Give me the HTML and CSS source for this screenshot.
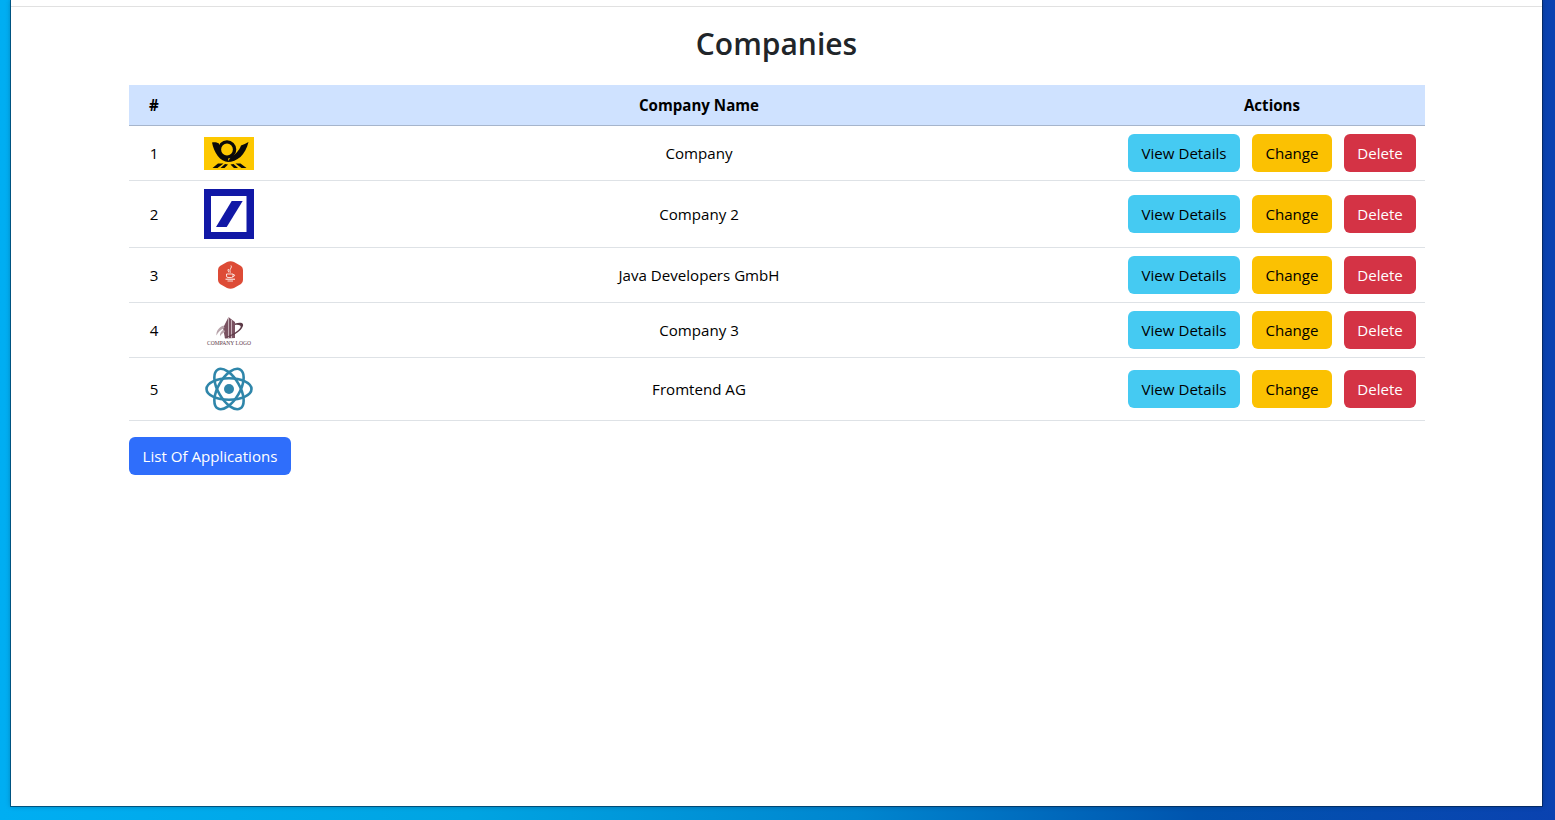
FILE: index.html
```html
<!DOCTYPE html>
<html lang="en">
<head>
<meta charset="utf-8">
<title>Companies</title>
<link rel="stylesheet" href="styles.css">
</head>
<body>
<main class="window">
  <hr class="top-rule">
  <div class="container">
    <h1 class="title">Companies</h1>
    <table class="companies">
      <colgroup>
        <col class="col-num"><col class="col-logo"><col class="col-name"><col class="col-actions">
      </colgroup>
      <thead>
        <tr><th>#</th><th></th><th>Company Name</th><th>Actions</th></tr>
      </thead>
      <tbody>
        <tr>
          <td>1</td>
          <td><svg class="logo logo-post" width="50" height="33" viewBox="0 0 50 33">
            <rect width="50" height="33" fill="#fdc800"/>
            <circle cx="23" cy="12.500" r="7.600" fill="none" stroke="#0a0a0a" stroke-width="3.400"/>
            <path d="M8 5.500 C10 5 12.500 5 15 6.500 L15 14 C16 18 19.500 21 24 21 L24.500 25 C16 25 10 15.500 8 5.500 Z" fill="#0a0a0a"/>
            <path d="M23.500 25 C33 25 41.500 18 44.500 5 C42 6.500 39.500 7.500 37 8.500 C35.500 13 31 18 27 20 Z" fill="#0a0a0a"/>
            <path d="M8.500 31 L14 26.500 L19.500 26.500 L13.500 31 Z M16.500 31 L21 27 L24 27.500 L20.500 31 Z M30 31 L26.500 27.500 L29.500 27 L34 31 Z M37.500 31 L31.500 26.500 L36.500 26.500 L42.500 31 Z" fill="#0a0a0a"/>
          </svg></td>
          <td>Company</td>
          <td><div class="actions"><a class="btn btn-info">View Details</a><a class="btn btn-warning">Change</a><a class="btn btn-danger">Delete</a></div></td>
        </tr>
        <tr>
          <td>2</td>
          <td><svg class="logo" width="50" height="50" viewBox="0 0 50 50">
            <rect width="50" height="50" fill="#1118a6"/>
            <rect x="7" y="7" width="35.500" height="36" fill="#fff"/>
            <path d="M27.700 12 H38.700 L22.700 38 H12 Z" fill="#1118a6"/>
          </svg></td>
          <td>Company 2</td>
          <td><div class="actions"><a class="btn btn-info">View Details</a><a class="btn btn-warning">Change</a><a class="btn btn-danger">Delete</a></div></td>
        </tr>
        <tr>
          <td>3</td>
          <td><svg class="logo" width="50" height="38" viewBox="0 0 50 38">
            <path d="M23 6 Q26.500 4.500 30 6 L37 10 Q39 11.500 39 14 V24 Q39 26.500 37 28 L30 32 Q26.500 33.500 23 32 L16 28 Q14 26.500 14 24 V14 Q14 11.500 16 10 Z" fill="#dd4b36"/>
            <g fill="none" stroke="#fff">
              <path d="M27 9.500 C28.500 12 24.500 13 26.500 16.500 M24.500 13 C23.500 14.500 24.500 15.500 25 16.500" stroke-width="0.900"/>
              <path d="M22.500 18 H29 V20 Q29 21.500 27.500 21.500 H24 Q22.500 21.500 22.500 20 Z M29 18.500 Q31 18.500 30.500 19.800 Q30 20.800 28.500 20.800" stroke-width="0.800"/>
              <path d="M21.500 23.200 H31" stroke-width="1"/>
              <path d="M23.500 25 H29" stroke-width="0.800"/>
            </g>
          </svg></td>
          <td>Java Developers GmbH</td>
          <td><div class="actions"><a class="btn btn-info">View Details</a><a class="btn btn-warning">Change</a><a class="btn btn-danger">Delete</a></div></td>
        </tr>
        <tr>
          <td>4</td>
          <td><svg class="logo" width="50" height="38" viewBox="0 0 50 38">
            <path d="M24.500 6 L27 8 L31 11 V27 L21 27.500 L19 17 Z" fill="#7a5261"/>
            <path d="M24.500 6 V27 M27.500 9 V27" stroke="#d9c9ce" stroke-width="0.800"/>
            <path d="M31 12.500 C38 10.500 41 12.500 38 17 C35 21.500 28 25.500 20 27 C28 24 34.500 20 36.500 16.500 C37.500 14.500 35 13.500 31 14 Z" fill="#5c3a47"/>
            <path d="M19.500 14.500 C14.500 16.500 12 20.500 12.500 24.500 C14 21 17 18.500 20.500 17 Z M20 18.500 C17 20 15.500 22.500 16 25.500 C17 23.500 18.500 22 21 21 Z" fill="#b9a5ac"/>
            <text x="25" y="34" class="logo-caption" text-anchor="middle">COMPANY LOGO</text>
          </svg></td>
          <td>Company 3</td>
          <td><div class="actions"><a class="btn btn-info">View Details</a><a class="btn btn-warning">Change</a><a class="btn btn-danger">Delete</a></div></td>
        </tr>
        <tr>
          <td>5</td>
          <td><svg class="logo" width="50" height="46" viewBox="0 0 50 46">
            <g fill="none" stroke="#2f86aa" stroke-width="2.600">
              <ellipse cx="25" cy="23" rx="22.500" ry="10.800"/>
              <ellipse cx="25" cy="23" rx="22.500" ry="10.800" transform="rotate(60 25 23)"/>
              <ellipse cx="25" cy="23" rx="22.500" ry="10.800" transform="rotate(-60 25 23)"/>
            </g>
            <circle cx="25" cy="23" r="5" fill="#2f86aa"/>
          </svg></td>
          <td>Fromtend AG</td>
          <td><div class="actions"><a class="btn btn-info">View Details</a><a class="btn btn-warning">Change</a><a class="btn btn-danger">Delete</a></div></td>
        </tr>
      </tbody>
    </table>
    <a class="btn btn-primary">List Of Applications</a>
  </div>
</main>
</body>
</html>
```
FILE: styles.css
```css
* { box-sizing: border-box; }
html, body { margin: 0; height: 100%; }
body {
  height: 820px;
  overflow: hidden;
  padding: 0 13px 14px 11px;
  background: linear-gradient(90deg, #00aef2 0%, #00a4e2 30%, #0086cf 55%, #0054ae 77%, #0a42b0 100%);
  font-family: "Open Sans", "Noto Sans", sans-serif;
  font-size: 15.100px;
  line-height: 24px;
  color: #000;
}
.window {
  height: 806px;
  background: #fff;
  box-shadow: 0 0 0 1px rgba(0, 30, 60, .55), 0 0 5px rgba(0, 20, 50, .35);
  padding-top: 6px;
}
.top-rule {
  margin: 0;
  border: 0;
  border-top: 1px solid #e1e1e1;
}
.container {
  width: 1296px;
  margin-left: 118px;
}
.title {
  margin: 0;
  padding: 18px 1px 0 0;
  height: 78px;
  text-align: center;
  font-size: 30px;
  line-height: 38px;
  font-weight: 600;
  color: #212529;
}
.companies {
  width: 1296px;
  table-layout: fixed;
  border-collapse: collapse;
  margin-bottom: 16px;
}
.col-num { width: 50px; }
.col-logo { width: 100px; }
.col-name { width: 840px; }
.col-actions { width: 306px; }
.companies th {
  height: 40px;
  padding: 7px 8px;
  background: #cfe2ff;
  border-bottom: 1px solid #a6b5cc;
  text-align: center;
  font-weight: 700;
}
.companies td {
  padding: 8px;
  border-bottom: 1px solid #dee2e6;
  text-align: center;
  vertical-align: middle;
}
.logo { display: block; margin: 0 auto; }
.logo-post { margin-top: 1px; }
.logo-caption {
  font-family: "Liberation Serif", serif;
  font-size: 5.600px;
  fill: #5c3a47;
}
.actions {
  display: flex;
  justify-content: center;
  gap: 12px;
}
.btn {
  display: inline-block;
  height: 38px;
  padding: 7px 0 5px;
  border-radius: 6px;
  text-align: center;
  white-space: nowrap;
}
.btn-info { width: 112px; background: #45caf2; color: #000; }
.btn-warning { width: 80px; background: #fbc102; color: #000; }
.btn-danger { width: 72px; background: #d43345; color: #fff; }
.btn-primary { width: 162px; background: #2f6efb; color: #fff; }
```
